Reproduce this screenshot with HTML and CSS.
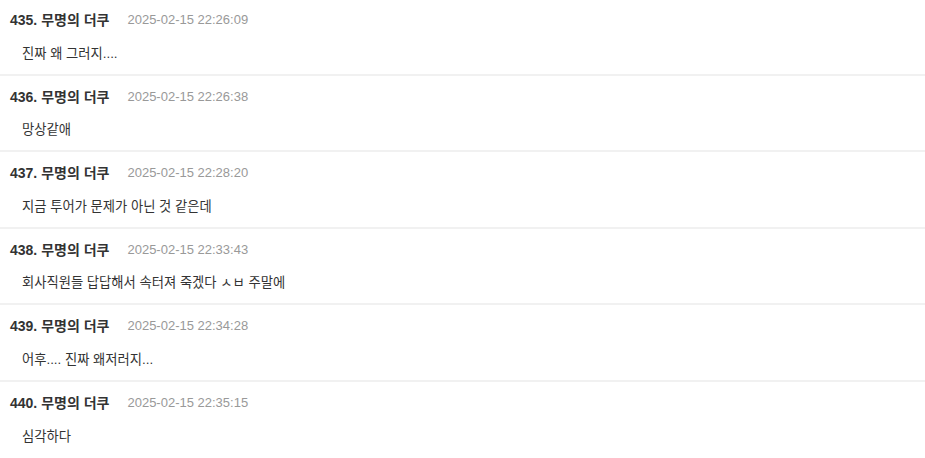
FILE: index.html
```html
<!DOCTYPE html>
<html lang="ko">
<head>
<meta charset="utf-8">
<link rel="stylesheet" href="styles.css">
</head>
<body>
<ul class="list">
  <li class="row">
    <div class="head"><span class="name">435. 무명의 더쿠</span><span class="date">2025-02-15 22:26:09</span></div>
    <div class="body">진짜 왜 그러지....</div>
  </li>
  <li class="row">
    <div class="head"><span class="name">436. 무명의 더쿠</span><span class="date">2025-02-15 22:26:38</span></div>
    <div class="body">망상같애</div>
  </li>
  <li class="row">
    <div class="head"><span class="name">437. 무명의 더쿠</span><span class="date">2025-02-15 22:28:20</span></div>
    <div class="body">지금 투어가 문제가 아닌 것 같은데</div>
  </li>
  <li class="row">
    <div class="head"><span class="name">438. 무명의 더쿠</span><span class="date">2025-02-15 22:33:43</span></div>
    <div class="body">회사직원들 답답해서 속터져 죽겠다 ㅅㅂ 주말에</div>
  </li>
  <li class="row">
    <div class="head"><span class="name">439. 무명의 더쿠</span><span class="date">2025-02-15 22:34:28</span></div>
    <div class="body">어후.... 진짜 왜저러지...</div>
  </li>
  <li class="row">
    <div class="head"><span class="name">440. 무명의 더쿠</span><span class="date">2025-02-15 22:35:15</span></div>
    <div class="body">심각하다</div>
  </li>
</ul>
</body>
</html>
```
FILE: styles.css
```css
html, body {
  margin: 0;
  padding: 0;
  background: #ffffff;
}
body {
  font-family: "Liberation Sans", "Noto Sans CJK KR", sans-serif;
  color: #333333;
  overflow: hidden;
}
.list {
  list-style: none;
  margin: -1px 0 0;
  padding: 0;
}
.row {
  padding: 11px 10px 10px;
  border-bottom: 2px solid #f1f1f1;
}
.row:last-child {
  border-bottom: none;
}
.head {
  display: flex;
  align-items: center;
  gap: 18px;
  height: 20px;
  line-height: 20px;
}
.name {
  font-size: 14px;
  font-weight: bold;
  color: #333333;
}
.date {
  font-size: 13px;
  color: #999999;
}
.body {
  margin-top: 13.6px;
  padding-left: 12px;
  font-size: 13.3px;
  line-height: 20px;
  color: #333333;
}
```
